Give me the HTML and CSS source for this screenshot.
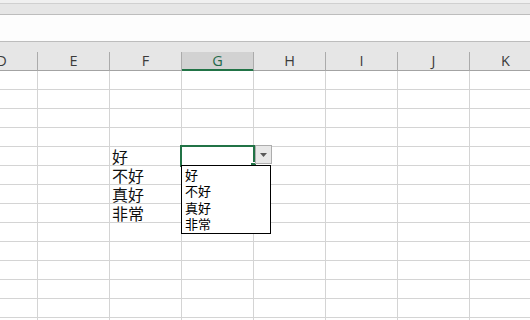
FILE: index.html
```html
<!DOCTYPE html>
<html lang="zh">
<head>
<meta charset="utf-8">
<title>Sheet</title>
<link rel="stylesheet" href="styles.css">
</head>
<body>
<div class="app">
  <div class="strip strip-top"></div>
  <div class="strip strip-ribbon"></div>
  <div class="strip strip-formula"></div>
  <div class="strip strip-gap"></div>
  <div class="sheet">
    <div class="grid">
      <div class="hdr">
        <div class="h">D</div><div class="h">E</div><div class="h">F</div><div class="h h-sel">G</div><div class="h">H</div><div class="h">I</div><div class="h">J</div><div class="h">K</div>
      </div>
      <div class="row"><div class="c"></div><div class="c"></div><div class="c"></div><div class="c"></div><div class="c"></div><div class="c"></div><div class="c"></div><div class="c"></div></div>
      <div class="row"><div class="c"></div><div class="c"></div><div class="c"></div><div class="c"></div><div class="c"></div><div class="c"></div><div class="c"></div><div class="c"></div></div>
      <div class="row"><div class="c"></div><div class="c"></div><div class="c"></div><div class="c"></div><div class="c"></div><div class="c"></div><div class="c"></div><div class="c"></div></div>
      <div class="row"><div class="c"></div><div class="c"></div><div class="c"></div><div class="c"></div><div class="c"></div><div class="c"></div><div class="c"></div><div class="c"></div></div>
      <div class="row"><div class="c"></div><div class="c"></div><div class="c">好</div>
        <div class="c c-active">
          <div class="sel-frame"><span class="fill-handle"></span></div>
          <div class="dd-btn"><svg width="7" height="4" viewBox="0 0 7 4"><polygon points="0,0 7,0 3.5,4" fill="#595959"/></svg></div>
          <ul class="dd-list">
            <li>好</li>
            <li>不好</li>
            <li>真好</li>
            <li>非常</li>
          </ul>
        </div>
        <div class="c"></div><div class="c"></div><div class="c"></div><div class="c"></div></div>
      <div class="row"><div class="c"></div><div class="c"></div><div class="c">不好</div><div class="c"></div><div class="c"></div><div class="c"></div><div class="c"></div><div class="c"></div></div>
      <div class="row"><div class="c"></div><div class="c"></div><div class="c">真好</div><div class="c"></div><div class="c"></div><div class="c"></div><div class="c"></div><div class="c"></div></div>
      <div class="row"><div class="c"></div><div class="c"></div><div class="c">非常</div><div class="c"></div><div class="c"></div><div class="c"></div><div class="c"></div><div class="c"></div></div>
      <div class="row"><div class="c"></div><div class="c"></div><div class="c"></div><div class="c"></div><div class="c"></div><div class="c"></div><div class="c"></div><div class="c"></div></div>
      <div class="row"><div class="c"></div><div class="c"></div><div class="c"></div><div class="c"></div><div class="c"></div><div class="c"></div><div class="c"></div><div class="c"></div></div>
      <div class="row"><div class="c"></div><div class="c"></div><div class="c"></div><div class="c"></div><div class="c"></div><div class="c"></div><div class="c"></div><div class="c"></div></div>
      <div class="row"><div class="c"></div><div class="c"></div><div class="c"></div><div class="c"></div><div class="c"></div><div class="c"></div><div class="c"></div><div class="c"></div></div>
      <div class="row"><div class="c"></div><div class="c"></div><div class="c"></div><div class="c"></div><div class="c"></div><div class="c"></div><div class="c"></div><div class="c"></div></div>
      <div class="row"><div class="c"></div><div class="c"></div><div class="c"></div><div class="c"></div><div class="c"></div><div class="c"></div><div class="c"></div><div class="c"></div></div>
    </div>
  </div>
</div>
</body>
</html>
```
FILE: styles.css
```css
html, body {
  margin: 0;
  padding: 0;
  background: #ffffff;
}
body {
  width: 530px;
  height: 320px;
  overflow: hidden;
}
.app {
  width: 530px;
  height: 320px;
  overflow: hidden;
  display: flex;
  flex-direction: column;
}
.strip {
  flex: none;
  box-sizing: border-box;
}
.strip-top {
  height: 4px;
  background: #f0f0f0;
  border-bottom: 1px solid #d0d0d0;
}
.strip-ribbon {
  height: 11px;
  background: #e6e6e6;
  border-bottom: 1px solid #bdbdbd;
}
.strip-formula {
  height: 27px;
  background: #fdfdfd;
  border-bottom: 1px solid #bdbdbd;
}
.strip-gap {
  height: 10px;
  background: #e6e6e6;
}
.sheet {
  flex: 1;
  overflow: hidden;
}
.grid {
  margin-left: -34px;
  width: 576px;
}
.hdr {
  display: flex;
  height: 19px;
  background: #e6e6e6;
}
.h {
  flex: none;
  width: 72px;
  height: 19px;
  box-sizing: border-box;
  border-right: 1px solid #ababab;
  border-bottom: 1px solid #a3a3a3;
  font-family: "Open Sans", "Noto Sans", sans-serif;
  font-size: 14.5px;
  line-height: 18px;
  color: #3b3b3b;
  text-align: center;
  padding-top: 0;
}
.h-sel {
  background: #d2d2d2;
  color: #1f6a4a;
  border-bottom-color: #217346;
  box-shadow: inset 0 -1px 0 #217346;
}
.row {
  display: flex;
  height: 19px;
}
.c {
  flex: none;
  width: 72px;
  height: 19px;
  box-sizing: border-box;
  border-right: 1px solid #d4d4d4;
  border-bottom: 1px solid #d4d4d4;
  font-family: "Noto Sans CJK SC", "Noto Sans", sans-serif;
  font-size: 16px;
  line-height: 18px;
  color: #111111;
  padding-left: 2px;
  white-space: nowrap;
}
.c-active {
  position: relative;
  z-index: 2;
}
.sel-frame {
  position: absolute;
  left: -2px;
  top: -2px;
  width: 75px;
  height: 22px;
  box-sizing: border-box;
  border: 2px solid #217346;
}
.fill-handle {
  position: absolute;
  right: -3px;
  bottom: -3px;
  width: 6px;
  height: 6px;
  box-sizing: border-box;
  background: #217346;
  border-left: 1px solid #ffffff;
  border-top: 1px solid #ffffff;
}
.dd-btn {
  position: absolute;
  left: 73px;
  top: -2px;
  width: 17px;
  height: 19px;
  box-sizing: border-box;
  background: #e8e8e8;
  border: 1px solid #adadad;
  display: flex;
  align-items: center;
  justify-content: center;
}
.dd-btn svg {
  display: block;
}
.dd-list {
  position: absolute;
  left: -1px;
  top: 18px;
  width: 90px;
  height: 69px;
  box-sizing: border-box;
  margin: 0;
  padding: 1px 0 0 3px;
  list-style: none;
  background: #ffffff;
  border: 1px solid #000000;
  font-family: "Noto Sans CJK SC", "Noto Sans", sans-serif;
  font-size: 13px;
  line-height: 16.4px;
  color: #000000;
}
.dd-list li {
  margin: 0;
  padding: 0;
}
```
